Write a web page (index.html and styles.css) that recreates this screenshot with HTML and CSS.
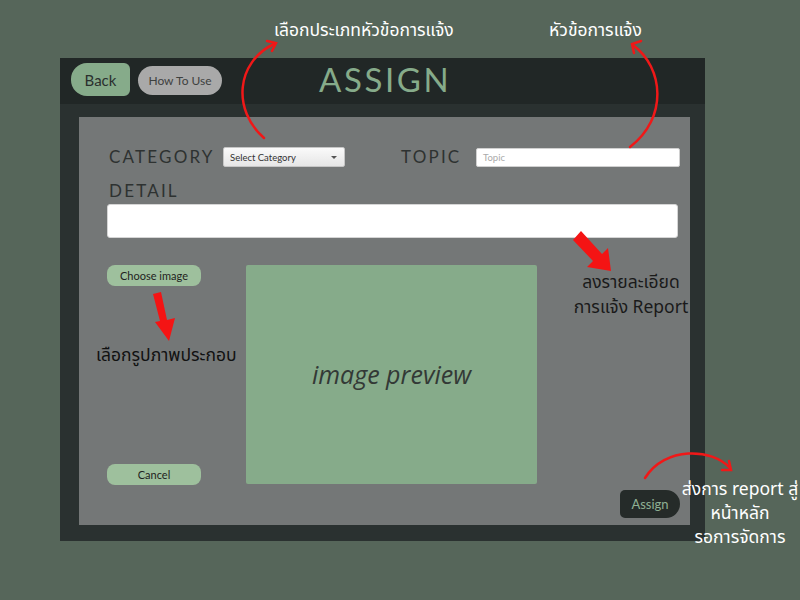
FILE: index.html
```html
<!DOCTYPE html>
<html lang="th">
<head>
<meta charset="utf-8">
<title>Assign</title>
<link rel="stylesheet" href="styles.css">
</head>
<body>
<div class="frame">
  <header class="topbar">
    <button class="btn-back">Back</button>
    <button class="btn-howto">How To Use</button>
    <h1 class="title">ASSIGN</h1>
  </header>
  <main class="panel">
    <div class="row-top">
      <label class="lbl lbl-cat">CATEGORY</label>
      <div class="select"><span>Select Category</span><span class="caret"></span></div>
      <label class="lbl lbl-topic">TOPIC</label>
      <div class="input topic">Topic</div>
    </div>
    <label class="lbl lbl-detail">DETAIL</label>
    <div class="textarea"></div>
    <div class="media">
      <div class="side">
        <button class="btn-green">Choose image</button>
        <button class="btn-green">Cancel</button>
      </div>
      <div class="preview">image preview</div>
    </div>
    <div class="foot">
      <button class="btn-assign">Assign</button>
    </div>
  </main>
</div>

<svg class="arrows" width="800" height="600" viewBox="0 0 800 600">
  <g fill="none" stroke="#f01818" stroke-width="2.5" stroke-linecap="round">
    <path d="M264 138 C 232 110, 236 62, 274 44"/>
    <path d="M267 41 L276 43 L272 51"/>
    <path d="M630 147 C 668 118, 664 68, 633 45"/>
    <path d="M641 41 L632 44 L634 53"/>
    <path d="M645 478 C 665 446, 712 448, 730 468"/>
    <path d="M722 470 L731 470 L729 461"/>
  </g>
  <g fill="#f41414">
    <polygon points="573,240 581,231 602,254 608,248 611,271 587,267 593,261"/>
    <polygon points="153,294 161,292 167,320 175,318 169,341 155,322 160,321"/>
  </g>
</svg>

<div class="note note-cat">เลือกประเภทหัวข้อการแจ้ง</div>
<div class="note note-topic">หัวข้อการแจ้ง</div>
<div class="note note-detail">ลงรายละเอียด<br>การแจ้ง Report</div>
<div class="note note-img">เลือกรูปภาพประกอบ</div>
<div class="note note-send">ส่งการ report สู่<br>หน้าหลัก<br>รอการจัดการ</div>
</body>
</html>
```

FILE: styles.css
```css
* { box-sizing: border-box; }
html, body { margin: 0; padding: 0; }
body {
  width: 800px;
  height: 600px;
  background: #56665a;
  font-family: "Lato", "Noto Sans", sans-serif;
  position: relative;
  overflow: hidden;
}
.frame {
  margin: 58px 0 0 60px;
  width: 645px;
  height: 483px;
  background: #2a3130;
  display: flex;
  flex-direction: column;
}
.topbar {
  height: 46px;
  background: #212726;
  display: flex;
  align-items: center;
  padding-left: 11px;
}
button {
  border: none;
  font-family: "Lato", "Noto Sans", sans-serif;
  cursor: pointer;
  padding: 0;
}
.btn-back {
  width: 59px;
  height: 33px;
  margin-bottom: 3px;
  background: #86ab8a;
  color: #2a302e;
  font-size: 15px;
  border-radius: 16px 6px 6px 16px;
}
.btn-howto {
  margin-left: 8px;
  margin-bottom: 2px;
  width: 84px;
  height: 29px;
  background: #a9a9a9;
  color: #3e4140;
  font-size: 12px;
  border-radius: 15px;
}
.title {
  margin: 0 0 4px 97px;
  font-family: "Lato", sans-serif;
  font-weight: 400;
  font-size: 33px;
  letter-spacing: 2.6px;
  color: #86ab8a;
  line-height: 1;
}
.panel {
  margin: 13px 15px 16px 19px;
  flex: 1;
  background: #747777;
  padding: 30px 10px 0 28px;
  display: flex;
  flex-direction: column;
}
.lbl {
  font-family: "Lato", sans-serif;
  font-size: 17px;
  letter-spacing: 2.2px;
  color: #2e3231;
  line-height: 20px;
}
.row-top {
  display: flex;
  align-items: center;
  height: 20px;
}
.lbl-cat { margin-left: 2px; width: 114px; }
.select {
  width: 122px;
  height: 20px;
  background: linear-gradient(#fafafa, #e6e6e6);
  border: 1px solid #c6c6c6;
  border-radius: 2px;
  display: flex;
  align-items: center;
  justify-content: space-between;
  padding: 0 7px 0 6px;
  font-size: 9.5px;
  color: #333;
}
.caret {
  width: 0; height: 0;
  border-left: 3px solid transparent;
  border-right: 3px solid transparent;
  border-top: 3px solid #555;
}
.lbl-topic { margin-left: 56px; width: 75px; }
.input {
  width: 204px;
  height: 19px;
  background: #fff;
  border: 1px solid #d0d0d0;
  border-radius: 2px;
  font-size: 9.5px;
  color: #aaa;
  padding: 0 6px;
  display: flex;
  align-items: center;
}
.lbl-detail { margin: 14px 0 0 2px; }
.textarea {
  margin-top: 3px;
  width: 571px;
  height: 34px;
  background: #fff;
  border: 1px solid #d5d5d5;
  border-radius: 3px;
}
.media {
  margin-top: 27px;
  display: flex;
  gap: 45px;
}
.side {
  width: 94px;
  height: 220px;
  display: flex;
  flex-direction: column;
  justify-content: space-between;
}
.btn-green {
  width: 94px;
  height: 21px;
  background: #9ec09d;
  color: #1f2321;
  font-size: 11px;
  border-radius: 8px;
}
.preview {
  width: 291px;
  height: 219px;
  background: #86ab8a;
  border-radius: 2px;
  display: flex;
  align-items: center;
  justify-content: center;
  font-family: "Open Sans", sans-serif;
  font-style: italic;
  font-size: 25px;
  color: #333936;
  padding-bottom: 2px;
}
.foot {
  display: flex;
  justify-content: flex-end;
  margin-top: 5px;
}
.btn-assign {
  width: 60px;
  height: 28px;
  background: #252b29;
  color: #8fb093;
  font-size: 13px;
  border-radius: 5px 14px 14px 5px;
}
.arrows {
  position: absolute;
  left: 0;
  top: 0;
  pointer-events: none;
}
.note {
  position: absolute;
  font-family: "Noto Sans", "Noto Sans Thai", "Tahoma", sans-serif;
  font-size: 17.5px;
  line-height: 25px;
  white-space: nowrap;
}
.note-cat { left: 274px; top: 17px; color: #fff; }
.note-topic { left: 549px; top: 17px; color: #fff; }
.note-detail { left: 572px; top: 269px; color: #1a1a1a; text-align: center; width: 118px; }
.note-img { left: 96px; top: 342px; color: #111; }
.note-send { left: 680px; top: 476px; color: #fff; text-align: center; width: 120px; line-height: 24px; }
```
